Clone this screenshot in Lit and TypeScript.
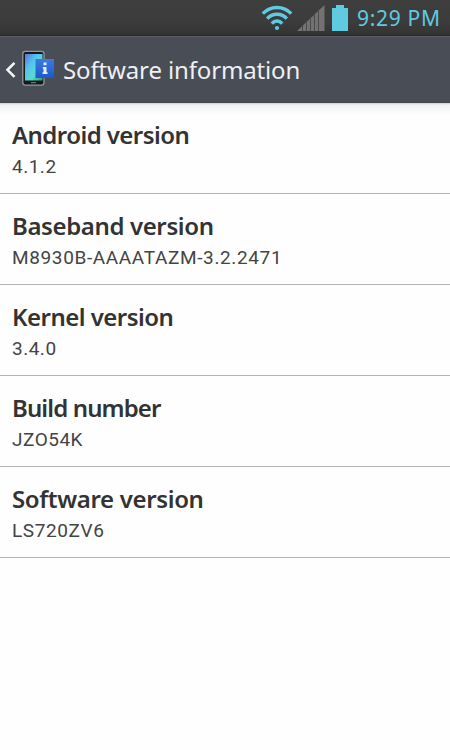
import { LitElement, html, css } from "lit";
import { customElement, property } from "lit/decorators.js";
import { styleMap } from "lit/directives/style-map.js";

interface Info {
  label: string;
  value: string;
  labelTracking: number;
  valueTracking: number;
}

const ITEMS: Info[] = [
  { label: "Android version", value: "4.1.2", labelTracking: -0.56, valueTracking: 0.5 },
  { label: "Baseband version", value: "M8930B-AAAATAZM-3.2.2471", labelTracking: -0.38, valueTracking: 0.63 },
  { label: "Kernel version", value: "3.4.0", labelTracking: -0.52, valueTracking: 0.5 },
  { label: "Build number", value: "JZO54K", labelTracking: -0.88, valueTracking: 0.5 },
  { label: "Software version", value: "LS720ZV6", labelTracking: -0.35, valueTracking: 0.6 },
];

@customElement("status-bar")
class StatusBar extends LitElement {
  static styles = css`
    :host {
      display: flex;
      box-sizing: border-box;
      height: 36px;
      padding-right: 8px;
      align-items: center;
      justify-content: flex-end;
      background: linear-gradient(#3e3e3e, #3c3c3c 60%, #343434 94%, #262626);
      font: 21px/36px "Noto Sans", sans-serif;
      color: #5fcbe0;
    }
    svg { display: block; flex: none; }
    .wifi { margin-right: 4px; }
    .signal { margin-right: 7px; }
    .battery { margin-right: 9px; }
    .clock { width: 85px; white-space: nowrap; letter-spacing: 0.7px; }
  `;
  render() {
    return html`
      <svg class="wifi" width="32" height="36" viewBox="0 0 32 36" fill="none" stroke="#5fcbe0" stroke-width="3.400">
        <path d="M1.800 13.600Q7.500 7.500 16 7.500T30.200 13.600" />
        <path d="M6.200 18.600Q10 14.200 16 14.200T25.800 18.600" />
        <path d="M10.800 23.600Q13 21 16 21T21.200 23.600" />
        <circle cx="16" cy="28" r="2.100" fill="#5fcbe0" stroke="none" />
      </svg>
      <svg class="signal" width="28" height="36" viewBox="0 0 28 36">
        <path d="M0 31L27.500 5V31Z" fill="#727272" />
        <path d="M5.500 25V31M9.500 21V31M13.500 17V31M17.500 13V31M21.500 9V31" stroke="#4b4b4b" />
      </svg>
      <svg class="battery" width="16" height="36" viewBox="0 0 16 36" fill="#5fcbe0">
        <path d="M4 5H12V8H16V31H0V8H4Z" />
      </svg>
      <span class="clock">9:29 PM</span>
    `;
  }
}

@customElement("title-bar")
class TitleBar extends LitElement {
  static styles = css`
    :host {
      display: flex;
      box-sizing: border-box;
      height: 67px;
      align-items: center;
      background: #494d56;
      border-top: 1px solid #5b5c64;
      border-bottom: 1px solid #42464e;
      font: 24px/65px "Noto Sans", sans-serif;
      color: #eef0f2;
    }
    svg { display: block; flex: none; }
    .title { margin-left: 7px; white-space: nowrap; letter-spacing: -0.14px; }
  `;
  render() {
    return html`
      <svg width="56" height="65" viewBox="0 37 56 65">
        <defs>
          <linearGradient id="screen" x1="0" y1="0" x2="1" y2="1">
            <stop offset="0" stop-color="#5a72dc" />
            <stop offset=".35" stop-color="#52c4f0" />
            <stop offset=".65" stop-color="#58dccb" />
            <stop offset="1" stop-color="#2e9e72" />
          </linearGradient>
          <linearGradient id="badge" x1="0" y1="0" x2="0" y2="1">
            <stop offset="0" stop-color="#3b7be2" />
            <stop offset="1" stop-color="#1c58cf" />
          </linearGradient>
        </defs>
        <path d="M14.500 62.800L7.500 69.800L14.500 76.800" fill="none" stroke="#f4f5f6" stroke-width="2.600" />
        <rect x="22.800" y="51.300" width="21.200" height="33.800" rx="2.500" fill="#17191d" stroke="#94979b" stroke-width="1.300" />
        <rect x="25" y="54" width="17.500" height="26.500" fill="url(#screen)" />
        <rect x="31" y="82" width="5" height="1.200" fill="#777" />
        <rect x="35.500" y="59" width="18.500" height="19" fill="url(#badge)" />
        <path d="M43.500 62.500H46.500V65.300H43.500ZM42.800 67H46.500V72.200H47.500V74H42.500V72.200H43.500V68.800H42.800Z" fill="#e6f0ff" />
      </svg>
      <span class="title">Software information</span>
    `;
  }
}

@customElement("info-row")
class InfoRow extends LitElement {
  @property({ attribute: false }) info!: Info;
  static styles = css`
    :host {
      display: block;
      box-sizing: border-box;
      height: 91px;
      padding: 15px 12px 0;
      border-bottom: 1px solid #b3b3b3;
      font-family: "Noto Sans", sans-serif;
      white-space: nowrap;
    }
    .label { font-size: 24px; line-height: 33px; font-weight: 600; color: #333; }
    .value { font-family: Roboto, sans-serif; font-size: 19px; line-height: 31px; color: #444; }
  `;
  render() {
    const { label, value, labelTracking, valueTracking } = this.info;
    return html`
      <div class="label" style=${styleMap({ letterSpacing: `${labelTracking}px` })}>${label}</div>
      <div class="value" style=${styleMap({ letterSpacing: `${valueTracking}px` })}>${value}</div>
    `;
  }
}

@customElement("app-root")
class AppRoot extends LitElement {
  static styles = css`
    :host { display: block; height: 750px; background: #fefefe; overflow: hidden; }
    .list { background: linear-gradient(#cfcfcf, #f2f2f2 2px, #fefefe 12px); }
  `;
  render() {
    return html`
      <status-bar></status-bar>
      <title-bar></title-bar>
      <div class="list">
        ${ITEMS.map((info) => html`<info-row .info=${info}></info-row>`)}
      </div>
    `;
  }
}
